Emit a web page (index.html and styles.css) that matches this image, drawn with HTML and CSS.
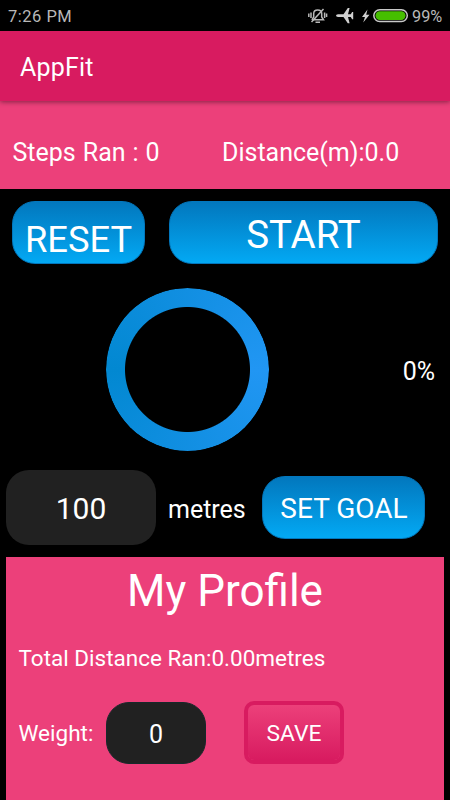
FILE: index.html
```html
<!DOCTYPE html>
<html lang="en">
<head>
<meta charset="utf-8">
<title>AppFit</title>
<link rel="stylesheet" href="styles.css">
</head>
<body>
<div class="status">
  <span class="time">7:26 PM</span>
  <svg class="sysicons" width="104" height="31" viewBox="305 0 104 31">
    <g fill="none" stroke="#b8b8b8" stroke-width="1.5">
      <path d="M312 19.800h11.500l-1.800-2.800v-3.500q0-3.500-4-3.500t-4 3.500v3.500l-1.800 2.800"/>
      <path d="M315.500 22.200h4.500M311 12.500v5.500M308.800 13.500v3.500M324.600 12.500v5.500M326.600 13.500v3.500"/>
      <path d="M311.500 22L323.500 9"/>
    </g>
    <path fill="#d0d0d0" d="M336 15.500q0-1.100 2-1.300h5.500L347.800 8h1.800l-1.600 6.200h2.800l1.300-2.200h1.100v7.200h-1.100l-1.300-2.200H348l1.600 6.200h-1.800L343.500 17H338q-2-.2-2-1.500z"/>
    <path fill="#d0d0d0" d="M367.500 9.500l-5.500 7.500h3l-1.800 5.500 6.300-7.800h-3.300z"/>
    <rect x="373.800" y="9.700" width="33.500" height="11.800" rx="5.900" fill="none" stroke="#c8c8c8" stroke-width="1.500"/>
    <rect x="375.500" y="11.300" width="30" height="8.600" rx="4.300" fill="#46bf00"/>
  </svg>
  <span class="battery">99%</span>
</div>
<header class="appbar"><span>AppFit</span></header>
<section class="stats"><span class="steps">Steps Ran : 0</span><span class="distance">Distance(m):0.0</span></section>
<section class="actions">
  <button class="blue reset"><span>RESET</span></button>
  <button class="blue start"><span>START</span></button>
</section>
<section class="progress">
  <div class="ring"></div>
  <span class="percent">0%</span>
</section>
<section class="goal">
  <div class="field goal-field"><span>100</span></div>
  <span class="unit">metres</span>
  <button class="blue set"><span>SET GOAL</span></button>
</section>
<main class="profile">
  <h1><span>My Profile</span></h1>
  <p class="total"><span>Total Distance Ran:0.00metres</span></p>
  <div class="weight">
    <span class="label">Weight:</span>
    <div class="field weight-field"><span>0</span></div>
    <button class="save"><span>SAVE</span></button>
  </div>
  <p class="calories">Total calories burnt:0.00cal</p>
</main>
</body>
</html>
```
FILE: styles.css
```css
* { box-sizing: border-box; }
body { margin: 0; width: 450px; height: 800px; overflow: hidden; display: flex; flex-direction: column; background: #000; color: #fff; font-family: Roboto, "Liberation Sans", sans-serif; white-space: nowrap; }
button { border: 0; padding: 0; color: #fff; font-family: inherit; }
.status { height: 31px; flex: none; display: flex; align-items: center; padding: 0 6px 0 8px; color: #b8b8b8; font-size: 16.500px; }
.time { flex: 1; letter-spacing: .5px; padding-top: 2px; }
.sysicons { margin-right: 3px; }
.battery { width: 32px; padding-top: 1px; font-size: 16.300px; }
.appbar { height: 70px; flex: none; display: flex; align-items: center; padding: 3px 0 0 20px; background: #d81b60; font-size: 25px; letter-spacing: .2px; position: relative; box-shadow: 0 1px 5px rgba(0,0,0,.45); }
.stats { height: 88px; flex: none; display: flex; align-items: center; padding: 15px 0 0 12.500px; background: #ec407a; font-size: 25px; }
.steps { width: 209.500px; word-spacing: .8px; }
.actions { height: 75px; flex: none; display: flex; gap: 24px; padding: 12px 12px 0; }
.blue { height: 63px; border: 1px solid #0277bd; border-radius: 23px; background: linear-gradient(#0277bd, #03a9f4); display: flex; align-items: center; justify-content: center; }
.reset { width: 133px; font-size: 36.300px; padding-top: 13px; }
.start { width: 269px; font-size: 38.500px; padding-top: 3px; }
.progress { height: 206px; flex: none; display: flex; align-items: center; justify-content: space-between; padding: 6px 15px 0 106px; }
.ring { width: 163px; height: 163px; margin-top: -1px; border-radius: 50%; background: conic-gradient(from 90deg, #2196f3, #0288d1, #2196f3); -webkit-mask: radial-gradient(circle, transparent 62px, #000 63px); mask: radial-gradient(circle, transparent 62px, #000 63px); }
.percent { font-size: 25px; padding-top: 3px; }
.goal { height: 87px; flex: none; display: flex; align-items: center; padding: 0 0 12px 6px; }
.field { background: #212121; border-radius: 23px; display: flex; align-items: center; justify-content: center; }
.goal-field { width: 150px; height: 75px; font-size: 30px; padding-top: 2px; }
.unit { width: 94px; margin-left: 12px; padding-top: 3px; font-size: 25px; }
.set { width: 163px; font-size: 28px; padding-top: 2px; }
.set span { padding-left: 1px; }
.profile { height: 243px; flex: none; margin: 0 6px; background: #ec407a; overflow: hidden; }
h1 { margin: 0; height: 66px; font-size: 44px; font-weight: 400; line-height: 68px; text-align: center; }
.total { margin: 20px 0 0 12.500px; height: 30px; line-height: 30px; font-size: 22.500px; }
.weight { margin-top: 28px; display: flex; align-items: center; padding-left: 12.500px; }
.label { width: 87.500px; font-size: 22.500px; padding-top: 1px; }
.weight-field { width: 100px; height: 62px; font-size: 25px; padding-top: 3px; border: 1px solid #17282a; }
.save { width: 100px; height: 63px; margin-left: 38px; padding-top: 2px; font-size: 22.800px; border: 4px solid #d81b60; border-radius: 10px; background: linear-gradient(#ec407a, #d81b60) padding-box; }
.calories { margin: 28px 0 0 12.500px; font-size: 22.500px; line-height: 32px; }
```
